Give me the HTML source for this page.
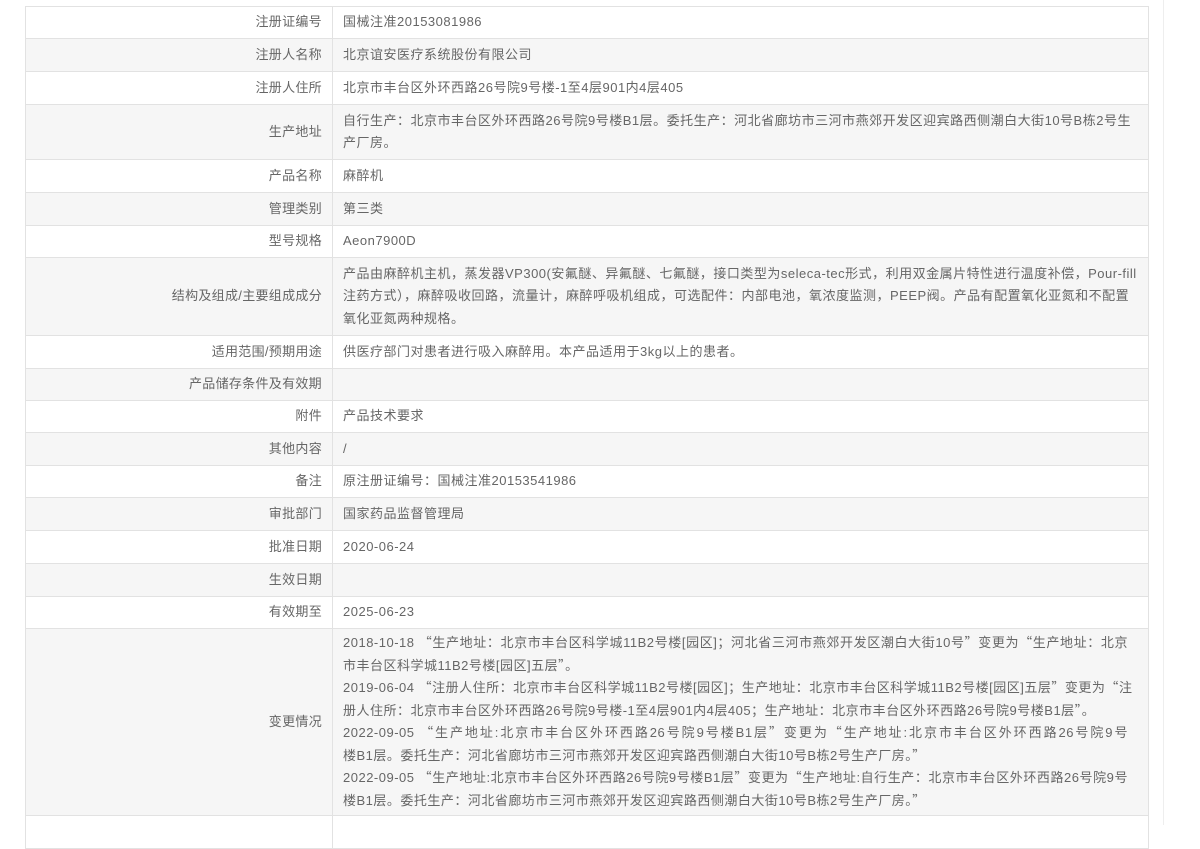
<!DOCTYPE html>
<html><head><meta charset="utf-8"><style>
body{margin:0;background:#fff;font-family:"Liberation Sans","Noto Sans CJK SC",sans-serif;font-size:13px;color:#666;width:1200px;height:825px;overflow:hidden;position:relative}
table{position:absolute;left:25px;top:6px;width:1124px;border-collapse:collapse;letter-spacing:0.5px}
td{border:1px solid #e2e2e2;padding:0 10px;line-height:22.5px;vertical-align:middle}
td.l{width:286px;text-align:right;letter-spacing:0.3px}
td.n{white-space:nowrap}
td.n div{height:22.5px;overflow:visible}
.j{width:785px;text-align:justify;text-align-last:justify;text-justify:inter-character}
.q{font-family:"Noto Sans CJK SC",sans-serif;line-height:0}
tr:nth-child(even) td{background:#f6f6f6}
.vl{position:absolute;left:1163px;top:0;width:1px;height:825px;background:#eee}
</style></head><body>
<div class="vl"></div>
<table>
<tr style="height:32px"><td class="l">注册证编号</td><td>国械注准20153081986</td></tr>
<tr style="height:33px"><td class="l">注册人名称</td><td>北京谊安医疗系统股份有限公司</td></tr>
<tr style="height:33px"><td class="l">注册人住所</td><td>北京市丰台区外环西路26号院9号楼-1至4层901内4层405</td></tr>
<tr style="height:55px"><td class="l">生产地址</td><td>自行生产：北京市丰台区外环西路26号院9号楼B1层。委托生产：河北省廊坊市三河市燕郊开发区迎宾路西侧潮白大街10号B栋2号生产厂房。</td></tr>
<tr style="height:33px"><td class="l">产品名称</td><td>麻醉机</td></tr>
<tr style="height:33px"><td class="l">管理类别</td><td>第三类</td></tr>
<tr style="height:32px"><td class="l">型号规格</td><td>Aeon7900D</td></tr>
<tr style="height:78px"><td class="l">结构及组成/主要组成成分</td><td>产品由麻醉机主机，蒸发器VP300(安氟醚、异氟醚、七氟醚，接口类型为seleca-tec形式，利用双金属片特性进行温度补偿，Pour-fill注药方式），麻醉吸收回路，流量计，麻醉呼吸机组成，可选配件：内部电池，氧浓度监测，PEEP阀。产品有配置氧化亚氮和不配置氧化亚氮两种规格。</td></tr>
<tr style="height:33px"><td class="l">适用范围/预期用途</td><td>供医疗部门对患者进行吸入麻醉用。本产品适用于3kg以上的患者。</td></tr>
<tr style="height:32px"><td class="l">产品储存条件及有效期</td><td></td></tr>
<tr style="height:32px"><td class="l">附件</td><td>产品技术要求</td></tr>
<tr style="height:33px"><td class="l">其他内容</td><td>/</td></tr>
<tr style="height:32px"><td class="l">备注</td><td>原注册证编号：国械注准20153541986</td></tr>
<tr style="height:33px"><td class="l">审批部门</td><td>国家药品监督管理局</td></tr>
<tr style="height:33px"><td class="l">批准日期</td><td>2020-06-24</td></tr>
<tr style="height:33px"><td class="l">生效日期</td><td></td></tr>
<tr style="height:32px"><td class="l">有效期至</td><td>2025-06-23</td></tr>
<tr style="height:187px"><td class="l">变更情况</td><td class="n">
<div class="j">2018-10-18 <span class="q">“</span>生产地址：北京市丰台区科学城11B2号楼[园区]；河北省三河市燕郊开发区潮白大街10号<span class="q">”</span>变更为<span class="q">“</span>生产地址：北京</div>
<div>市丰台区科学城11B2号楼[园区]五层<span class="q">”</span>。</div>
<div class="j">2019-06-04 <span class="q">“</span>注册人住所：北京市丰台区科学城11B2号楼[园区]；生产地址：北京市丰台区科学城11B2号楼[园区]五层<span class="q">”</span>变更为<span class="q">“</span>注</div>
<div>册人住所：北京市丰台区外环西路26号院9号楼-1至4层901内4层405；生产地址：北京市丰台区外环西路26号院9号楼B1层<span class="q">”</span>。</div>
<div class="j">2022-09-05 <span class="q">“</span>生产地址:北京市丰台区外环西路26号院9号楼B1层<span class="q">”</span>变更为<span class="q">“</span>生产地址:北京市丰台区外环西路26号院9号</div>
<div>楼B1层。委托生产：河北省廊坊市三河市燕郊开发区迎宾路西侧潮白大街10号B栋2号生产厂房。<span class="q">”</span></div>
<div class="j">2022-09-05 <span class="q">“</span>生产地址:北京市丰台区外环西路26号院9号楼B1层<span class="q">”</span>变更为<span class="q">“</span>生产地址:自行生产：北京市丰台区外环西路26号院9号</div>
<div>楼B1层。委托生产：河北省廊坊市三河市燕郊开发区迎宾路西侧潮白大街10号B栋2号生产厂房。<span class="q">”</span></div>
</td></tr>
<tr style="height:33px"><td class="l"></td><td></td></tr>
</table>
</body></html>
